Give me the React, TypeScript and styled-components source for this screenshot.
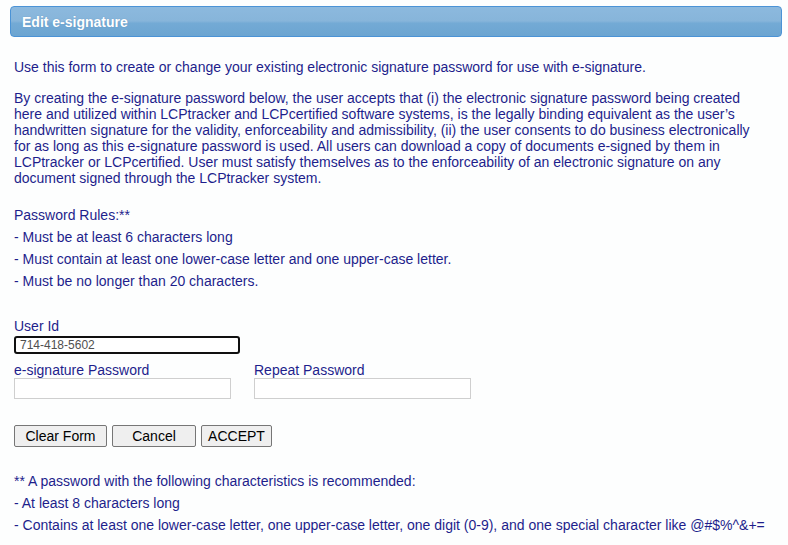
import styled, { createGlobalStyle } from "styled-components";

const GlobalStyle = createGlobalStyle`
  html, body {
    margin: 0;
    padding: 0;
    background: #fdfefe;
  }
  body {
    font-family: "Liberation Sans", Arial, sans-serif;
  }
`;

const Page = styled.div`
  padding: 6px 6px 0 10px;
  color: #1e1e8c;
  font-size: 14px;
`;

const Header = styled.div`
  height: 29px;
  border: 1px solid #4b93d6;
  border-radius: 4px;
  background: linear-gradient(
    to bottom,
    #8cb9de 0%,
    #87b5da 48%,
    #73aad5 56%,
    #6ca5d1 100%
  );
  display: flex;
  align-items: center;
  padding-left: 11px;
`;

const HeaderTitle = styled.h1`
  margin: 0;
  font-size: 14px;
  font-weight: bold;
  color: #ffffff;
  text-shadow: 0 0 1px rgba(60, 110, 160, 0.5);
`;

const Content = styled.div`
  padding-left: 4px;
`;

const Para = styled.p<{ $top: number }>`
  margin: ${(p) => p.$top}px 0 0 0;
  max-width: 745px;
  line-height: 16px;
`;

const RuleLine = styled.div<{ $top: number }>`
  margin-top: ${(p) => p.$top}px;
  line-height: 16px;
`;

const Label = styled.label<{ $top: number }>`
  display: block;
  margin-top: ${(p) => p.$top}px;
  line-height: 16px;
`;

const UserIdInput = styled.input`
  display: block;
  box-sizing: border-box;
  width: 226px;
  height: 18px;
  margin: 2px 0 0 0;
  padding: 0 4px;
  border: 2px solid #101010;
  border-radius: 3px;
  font-family: "Liberation Sans", Arial, sans-serif;
  font-size: 12px;
  color: #505050;
  background: #ffffff;
  outline: none;
`;

const PasswordRow = styled.div`
  display: flex;
  gap: 23px;
  margin-top: 8px;
`;

const Field = styled.div`
  display: flex;
  flex-direction: column;
`;

const TextInput = styled.input`
  box-sizing: border-box;
  width: 217px;
  height: 21px;
  margin: 0;
  border: 1px solid #cfcfcf;
  background: #ffffff;
  outline: none;
`;

const ButtonRow = styled.div`
  display: flex;
  gap: 5px;
  margin-top: 26px;
`;

const Button = styled.button<{ $width: number }>`
  box-sizing: border-box;
  width: ${(p) => p.$width}px;
  height: 22px;
  padding: 0;
  border: 1px solid #767676;
  border-radius: 2px;
  background: #efefef;
  color: #000000;
  font-family: "Liberation Sans", Arial, sans-serif;
  font-size: 14px;
  line-height: 20px;
`;

export default function App() {
  return (
    <>
      <GlobalStyle />
      <Page>
        <Header>
          <HeaderTitle>Edit e-signature</HeaderTitle>
        </Header>
        <Content>
          <Para $top={22}>
            Use this form to create or change your existing electronic
            signature password for use with e-signature.
          </Para>
          <Para $top={15}>
            By creating the e-signature password below, the user accepts that
            (i) the electronic signature password being created here and
            utilized within LCPtracker and LCPcertified software systems, is the
            legally binding equivalent as the user’s handwritten signature for
            the validity, enforceability and admissibility, (ii) the user
            consents to do business electronically for as long as this
            e-signature password is used. All users can download a copy of
            documents e-signed by them in LCPtracker or LCPcertified. User must
            satisfy themselves as to the enforceability of an electronic
            signature on any document signed through the LCPtracker system.
          </Para>
          <RuleLine $top={21}>Password Rules:**</RuleLine>
          <RuleLine $top={6}>- Must be at least 6 characters long</RuleLine>
          <RuleLine $top={6}>
            - Must contain at least one lower-case letter and one upper-case
            letter.
          </RuleLine>
          <RuleLine $top={6}>- Must be no longer than 20 characters.</RuleLine>
          <Label $top={29}>User Id</Label>
          <UserIdInput defaultValue="714-418-5602" readOnly />
          <PasswordRow>
            <Field>
              <Label $top={0}>e-signature Password</Label>
              <TextInput type="password" />
            </Field>
            <Field>
              <Label $top={0}>Repeat Password</Label>
              <TextInput type="password" />
            </Field>
          </PasswordRow>
          <ButtonRow>
            <Button $width={93}>Clear Form</Button>
            <Button $width={84}>Cancel</Button>
            <Button $width={71}>ACCEPT</Button>
          </ButtonRow>
          <RuleLine $top={26}>
            ** A password with the following characteristics is recommended:
          </RuleLine>
          <RuleLine $top={6}>- At least 8 characters long</RuleLine>
          <RuleLine $top={6}>
            - Contains at least one lower-case letter, one upper-case letter,
            one digit (0-9), and one special character like @#$%^&amp;+=
          </RuleLine>
        </Content>
      </Page>
    </>
  );
}
